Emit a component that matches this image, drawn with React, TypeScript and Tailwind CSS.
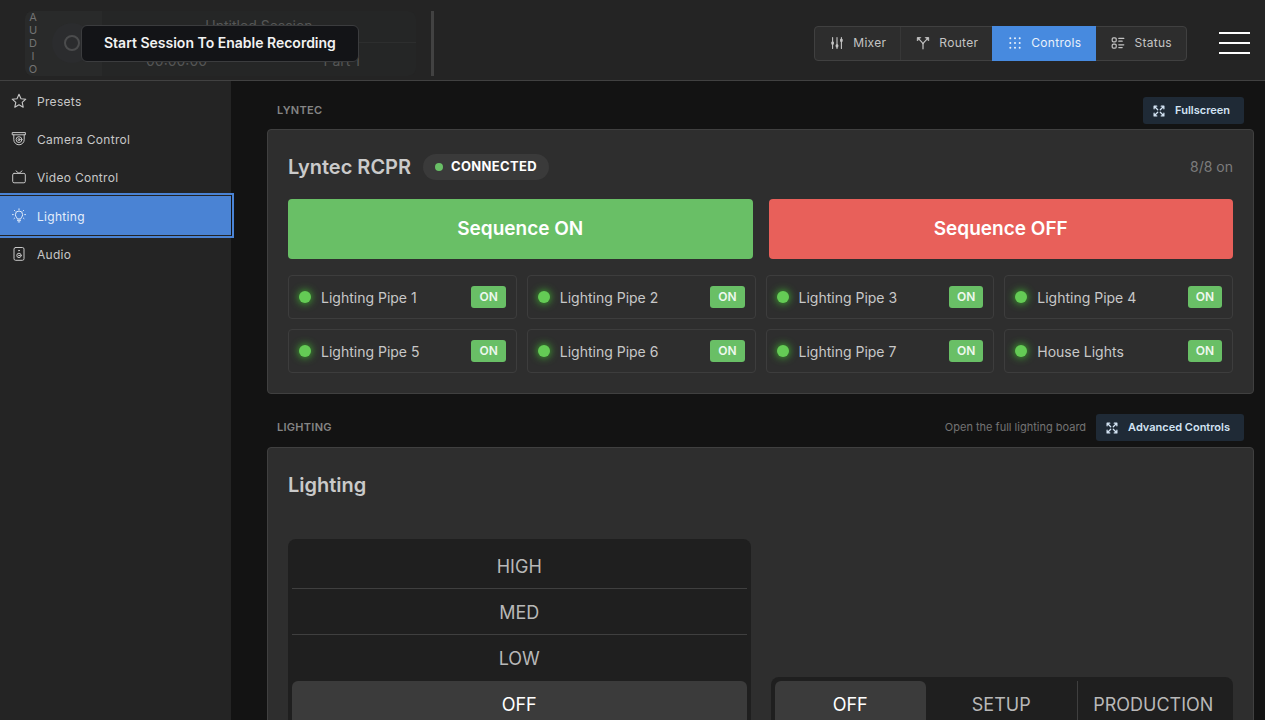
import type { ReactNode } from "react";

interface IconProps {
    className?: string;
}

function Svg({ className = "size-4", sw = 1.2, children }: { className?: string; sw?: number; children: ReactNode }) {
    return (
        <svg className={className} viewBox="0 0 16 16" fill="none" stroke="currentColor" strokeWidth={sw} strokeLinecap="round" strokeLinejoin="round" aria-hidden="true">
            {children}
        </svg>
    );
}

const MixerIcon = () => (
    <Svg className="size-4 shrink-0" sw={1.1}>
        <path d="M3.6 2.6v10.800M8 2.6v10.800M12.400 2.6v10.800" />
        <rect x="2.3" y="6.5" width="2.6" height="3.2" rx="1" fill="currentColor" stroke="none" />
        <rect x="6.7" y="9.2" width="2.6" height="3.2" rx="1" fill="currentColor" stroke="none" />
        <rect x="11.1" y="3.8" width="2.6" height="3.2" rx="1" fill="currentColor" stroke="none" />
    </Svg>
);

const RouterIcon = () => (
    <Svg className="size-4 shrink-0" sw={1.2}>
        <path d="M8 13.8V9.6C8 8.4 7.4 7.600 6.600 6.800L3 3.200M8 9.600c0-1.200.6-2 1.400-2.800L13 3.200" />
        <path d="M2.300 5.600V2.500h3.100zM13.700 5.600V2.500h-3.100z" fill="currentColor" strokeWidth="0.8" />
    </Svg>
);

const ControlsIcon = () => (
    <Svg className="size-4 shrink-0">
        {[3.3, 8, 12.7].map((y) =>
            [3.3, 8, 12.7].map((x) => <circle key={`${x}-${y}`} cx={x} cy={y} r="1" fill="currentColor" stroke="none" />)
        )}
    </Svg>
);

const StatusIcon = () => (
    <Svg className="size-4 shrink-0">
        <rect x="2.2" y="2.900" width="4" height="4" rx="1.200" />
        <rect x="2.2" y="9.100" width="4" height="4" rx="1.200" />
        <path d="M8.800 3.400h5M8.800 6.200h3.400M8.800 9.800h5M8.800 12.600h3.400" />
    </Svg>
);

const StarIcon = () => (
    <Svg sw={1.1}>
        <path d="M8 1.200l2 4.500 4.800.5-3.600 3.200 1 4.800L8 11.800l-4.200 2.400 1-4.800L1.200 6.200 6 5.700z" />
    </Svg>
);

const CameraIcon = () => (
    <Svg sw={1}>
        <path d="M1.600 1.600h12.800v2.200H1.600zM2.800 3.800v4.800a5.200 5.200 0 0 0 10.400 0V3.800" />
        <circle cx="8" cy="8.600" r="2.900" />
        <circle cx="8" cy="8.600" r="1" />
    </Svg>
);

const VideoIcon = () => (
    <Svg sw={1}>
        <rect x="1.700" y="4.400" width="12.600" height="9.400" rx="1.400" />
        <path d="M5 1.900l3 2.500 3-2.500" />
    </Svg>
);

const BulbIcon = () => (
    <Svg sw={1}>
        <path d="M6.300 10.600c0-.9-1.900-1.800-1.900-4a3.600 3.600 0 0 1 7.200 0c0 2.200-1.900 3.100-1.900 4zM6.400 12.300h3.200M7.200 13.900h1.600" />
        <path d="M8 .8v.8M3.400 2.400l.6.6M12.600 2.400l-.6.6M1.500 6.600h.8M13.700 6.600h.8M3 10.600l.6-.5M13 10.600l-.6-.5" />
    </Svg>
);

const SpeakerIcon = () => (
    <Svg sw={1}>
        <rect x="3" y="1.500" width="10" height="12.800" rx="1.600" />
        <circle cx="8" cy="9.400" r="2.200" />
        <circle cx="8" cy="9.400" r="0.400" fill="currentColor" />
        <circle cx="8" cy="4.600" r="0.400" fill="currentColor" />
    </Svg>
);

const ExpandIcon = ({ className = "size-3" }: IconProps) => (
    <Svg className={className} sw={1.7}>
        <path d="M1.500 5V1.500H5M11 1.500h3.500V5M14.500 11v3.500H11M5 14.500H1.500V11M2 2l4.300 4.300M14 2L9.700 6.300M14 14L9.700 9.700M2 14l4.300-4.300" />
    </Svg>
);

const tabs = [
    { name: "Mixer", icon: <MixerIcon /> },
    { name: "Router", icon: <RouterIcon /> },
    { name: "Controls", icon: <ControlsIcon />, active: true },
    { name: "Status", icon: <StatusIcon /> },
];

const sections = [
    { name: "Presets", icon: <StarIcon /> },
    { name: "Camera Control", icon: <CameraIcon /> },
    { name: "Video Control", icon: <VideoIcon /> },
    { name: "Lighting", icon: <BulbIcon />, active: true },
    { name: "Audio", icon: <SpeakerIcon /> },
];

const circuits = [
    "Lighting Pipe 1",
    "Lighting Pipe 2",
    "Lighting Pipe 3",
    "Lighting Pipe 4",
    "Lighting Pipe 5",
    "Lighting Pipe 6",
    "Lighting Pipe 7",
    "House Lights",
];

const levels = ["HIGH", "MED", "LOW", "OFF"];
const scenes = ["OFF", "SETUP", "PRODUCTION"];

function SessionPanel() {
    return (
        <div className="relative flex h-[65px] w-[391px] rounded-lg bg-[#252626] text-sm text-[#555656]">
            <div className="flex w-[77px] rounded-l-lg bg-[#292a2a]">
                <div className="flex w-4 flex-col items-center text-[11px] leading-[13px] text-[#737373]">
                    {"AUDIO".split("").map((letter) => (
                        <span key={letter}>{letter}</span>
                    ))}
                </div>
                <div className="flex flex-1 items-center justify-center">
                    <button type="button" aria-label="Record" className="flex size-10 items-center justify-center rounded-full bg-[#2b2c2e]">
                        <span className="size-4 rounded-full border-2 border-[#4b4c4d]" />
                    </button>
                </div>
            </div>
            <div className="flex flex-1 flex-col">
                <div className="flex h-8 items-center justify-center border-b border-[#2d2e2e]">Untitled Session</div>
                <div className="flex flex-1 items-center justify-between pt-1 pr-14 pl-11">
                    <span>00:00:00</span>
                    <span>Part 1</span>
                </div>
            </div>
            <div role="tooltip" className="absolute top-3.5 left-14 flex h-[37px] items-center rounded-md border border-[#3b3c3e] bg-[#131417] px-[22px] text-sm font-semibold whitespace-nowrap text-[#f2f2f2]">
                Start Session To Enable Recording
            </div>
        </div>
    );
}

function Header() {
    return (
        <header className="flex h-[81px] shrink-0 items-center border-b border-[#414141] bg-[#242424] pt-1.5 pr-[15px] pl-[25px]">
            <SessionPanel />
            <div className="ml-[15px] h-[65px] w-[3px] bg-[#424242]" />
            <nav className="ml-auto flex h-[35px] rounded border border-[#404040] bg-[#2d2d2d] text-xs text-[#c4c4c4]">
                {tabs.map((tab, i) => (
                    <button
                        key={tab.name}
                        type="button"
                        className={`flex items-center gap-2 tracking-wide ${tab.active ? "-my-px bg-[#478adf] px-[15px] text-[#e9f1fb]" : "px-3.5"} ${i === 0 ? "border-r border-[#373737]" : ""}`}
                    >
                        {tab.icon}
                        {tab.name}
                    </button>
                ))}
            </nav>
            <button type="button" aria-label="Menu" className="ml-8 flex flex-col gap-2">
                <span className="h-0.5 w-[31px] bg-white" />
                <span className="h-0.5 w-[31px] bg-white" />
                <span className="h-0.5 w-[31px] bg-white" />
            </button>
        </header>
    );
}

function Sidebar() {
    return (
        <aside className="relative z-10 w-[231px] shrink-0 bg-[#242424] pt-px">
            {sections.map((s) => (
                <button
                    key={s.name}
                    type="button"
                    className={`flex w-full items-center gap-2.5 pl-[11px] text-xs tracking-wide ${s.active ? "h-[39px] bg-[#4a83d4] text-[#e4eefb] outline-2 outline-offset-1 outline-[#4a83d4]" : "h-[38px] text-[#c8c8c8]"}`}
                >
                    {s.icon}
                    <span className="pt-0.5">{s.name}</span>
                </button>
            ))}
        </aside>
    );
}

function SectionBar({ title, hint, action }: { title: string; hint?: string; action: string }) {
    return (
        <div className="flex h-[27px] items-center px-2.5">
            <h2 className="text-[11px] font-semibold tracking-wide text-[#858585]">{title}</h2>
            <div className="ml-auto flex h-full items-center gap-2.5">
                {hint && <span className="text-[11px] text-[#737373]">{hint}</span>}
                <button type="button" className="flex h-full items-center gap-2.5 rounded-[3px] bg-[#1f2a36] pr-3.5 pl-2.5 text-[11px] font-semibold text-[#d3e3f3]">
                    <ExpandIcon />
                    {action}
                </button>
            </div>
        </div>
    );
}

function CircuitCard({ name }: { name: string }) {
    return (
        <div className="flex h-11 items-center rounded border border-[#3d3d3d] px-2.5">
            <span className="size-3 rounded-full bg-[#64cb55] shadow-[0_0_8px_#44d030]" />
            <span className="ml-2.5 pt-0.5 text-sm text-[#c8c8c8]">{name}</span>
            <button type="button" className="ml-auto h-[22px] rounded-[3px] bg-[#69bf66] px-2 text-xs font-semibold text-[#eef8ee]">
                ON
            </button>
        </div>
    );
}

function LyntecPanel() {
    return (
        <section className="mt-[5px] rounded border border-[#404040] bg-[#2e2e2e] px-5 pt-6 pb-5">
            <div className="flex h-[26px] items-center">
                <h1 className="text-xl font-semibold text-[#cacaca]">Lyntec RCPR</h1>
                <span className="ml-3 flex h-full items-center gap-2 rounded-full bg-[#3a3a3a] px-3 text-[13px] font-bold tracking-wide text-white">
                    <span className="size-2 rounded-full bg-[#69bf66]" />
                    CONNECTED
                </span>
                <span className="ml-auto text-sm text-[#7c7c7c]">8/8 on</span>
            </div>
            <div className="mt-[19px] grid grid-cols-2 gap-4 text-[19px] font-semibold text-white">
                <button type="button" className="h-[60px] rounded bg-[#69bf66]">Sequence ON</button>
                <button type="button" className="h-[60px] rounded bg-[#e8605a]">Sequence OFF</button>
            </div>
            <div className="mt-4 grid grid-cols-4 gap-2.5">
                {circuits.map((c) => (
                    <CircuitCard key={c} name={c} />
                ))}
            </div>
        </section>
    );
}

function LightingPanel() {
    return (
        <section className="mt-1.5 rounded border border-[#404040] bg-[#2e2e2e] px-5 pt-[23px] pb-5">
            <h1 className="text-xl leading-7 font-semibold text-[#cacaca]">Lighting</h1>
            <div className="mt-10 grid grid-cols-2 items-end gap-5 text-lg text-[#b8b8b8]">
                <div className="flex flex-col rounded-lg bg-[#1f1f1f] p-1">
                    {levels.map((level, i) => (
                        <button
                            key={level}
                            type="button"
                            className={`h-[46px] pt-0.5 ${level === "OFF" ? "rounded-md bg-[#3b3b3b] text-white" : i < 2 ? "border-b border-[#3f3f3f]" : ""}`}
                        >
                            {level}
                        </button>
                    ))}
                </div>
                <div className="grid grid-cols-3 rounded-lg bg-[#1f1f1f] p-1">
                    {scenes.map((scene) => (
                        <button
                            key={scene}
                            type="button"
                            className={`h-[46px] pt-0.5 ${scene === "OFF" ? "rounded-md bg-[#3b3b3b] text-white" : scene === "SETUP" ? "border-r border-[#3f3f3f]" : ""}`}
                        >
                            {scene}
                        </button>
                    ))}
                </div>
            </div>
        </section>
    );
}

export default function App() {
    return (
        <div className="flex h-screen flex-col bg-[#131313] font-['Inter',sans-serif]">
            <Header />
            <div className="flex min-h-0 flex-1">
                <Sidebar />
                <main className="min-w-0 flex-1 overflow-y-auto pt-4 pr-[11px] pb-5 pl-9 [scrollbar-width:none]">
                    <SectionBar title="LYNTEC" action="Fullscreen" />
                    <LyntecPanel />
                    <div className="h-5" />
                    <SectionBar title="LIGHTING" hint="Open the full lighting board" action="Advanced Controls" />
                    <LightingPanel />
                </main>
            </div>
        </div>
    );
}
